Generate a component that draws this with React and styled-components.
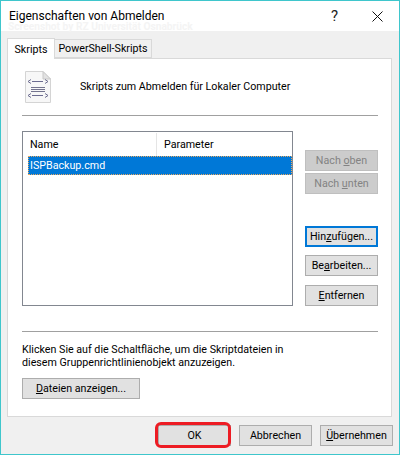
import React from 'react';
import styled, { createGlobalStyle } from 'styled-components';

const Global = createGlobalStyle`
  html, body { margin: 0; padding: 0; background: #fff; }
  * { box-sizing: border-box; }
`;

const Dialog = styled.div`
  position: relative;
  width: 400px;
  height: 455px;
  border: 1px solid #3fc6cc;
  background: #f0f0f0;
  font-family: Roboto, "Liberation Sans", sans-serif;
  font-size: 10.7px;
  color: #000;
  display: flex;
  flex-direction: column;
`;

const TitleBar = styled.div`
  height: 30px;
  flex: none;
  background: #fff;
  display: flex;
  align-items: center;
  padding: 0 16px 0 8px;
  font-size: 12px;
`;

const Title = styled.div`
  flex: 1;
`;

const HelpMark = styled.div`
  font-size: 15px;
  margin-right: 34px;
  color: #222;
`;

const Watermark = styled.div`
  position: absolute;
  left: 7px;
  top: 20px;
  font-size: 10.2px;
  font-weight: 700;
  color: #f4f4f4;
  white-space: nowrap;
`;

const TabStrip = styled.div`
  display: flex;
  align-items: flex-end;
  height: 21px;
  margin: 7px 0 -1px 6px;
  position: relative;
  z-index: 1;
`;

const Tab = styled.div`
  height: ${p => (p.$active ? 21 : 19)}px;
  width: ${p => p.$width}px;
  margin-bottom: ${p => (p.$active ? 0 : 1)}px;
  border: 1px solid #d9d9d9;
  border-left-width: ${p => (p.$active ? 1 : 0)}px;
  border-bottom-width: ${p => (p.$active ? 0 : 1)}px;
  background: ${p => (p.$active ? '#fff' : '#f0f0f0')};
  display: flex;
  align-items: center;
  justify-content: center;
  white-space: nowrap;
`;

const Panel = styled.div`
  width: 385px;
  height: 359px;
  margin-left: 6px;
  background: #fff;
  border: 1px solid #d9d9d9;
  padding: 0 13px 0 14px;
  display: flex;
  flex-direction: column;
`;

const Head = styled.div`
  height: 56px;
  flex: none;
  display: flex;
  align-items: center;
  padding: 0 0 1px 3px;
  gap: 29px;
`;

const Rule = styled.div`
  height: 1px;
  flex: none;
  width: 356px;
  background: #a0a0a0;
  margin-top: ${p => p.$top || 0}px;
`;

const Middle = styled.div`
  display: flex;
  margin-top: 15px;
  height: 175px;
  flex: none;
`;

const ListBox = styled.div`
  width: 272px;
  height: 175px;
  border: 1px solid #828790;
  padding: 1px 0 0 5px;
`;

const Columns = styled.div`
  display: flex;
  height: 23px;
  align-items: center;
`;

const Column = styled.div`
  width: ${p => p.$width}px;
  height: 100%;
  display: flex;
  align-items: center;
  border-right: ${p => (p.$divider ? '1px solid #e5e5e5' : 'none')};
  padding-left: ${p => (p.$divider ? 2 : 7)}px;
`;

const Row = styled.div`
  height: 19px;
  background: #0078d7;
  color: #fff;
  outline: 1px dotted #e8a860;
  outline-offset: -1px;
  padding-left: 2px;
  display: flex;
  align-items: center;
`;

const Side = styled.div`
  margin-left: 12px;
  width: 73px;
  padding-top: 19px;
  display: flex;
  flex-direction: column;
`;

const Button = styled.div`
  width: ${p => p.$width || 73}px;
  height: 21px;
  margin-top: ${p => p.$top || 0}px;
  flex: none;
  background: ${p => (p.$disabled ? '#cccccc' : '#e1e1e1')};
  color: ${p => (p.$disabled ? '#838383' : '#000')};
  border: ${p => (p.$focus ? '2px solid #0078d7' : p.$disabled ? '1px solid #bfbfbf' : '1px solid #adadad')};
  display: flex;
  align-items: center;
  justify-content: center;
  white-space: nowrap;
  position: relative;
`;

const Note = styled.div`
  margin-top: 11px;
  line-height: 13px;
  width: 356px;
`;

const Footer = styled.div`
  display: flex;
  justify-content: flex-end;
  gap: 8px;
  padding: 8px 6px 0 0;
`;

const Highlight = styled.div`
  position: absolute;
  left: -4px;
  top: -4px;
  width: 76px;
  height: 26px;
  border: 3px solid #ed1c24;
  border-radius: 6px;
`;

const ScriptIcon = () => (
  <svg width="26" height="32" viewBox="0 0 26 32">
    <path d="M0.5 0.5H18L25.5 8V31.5H0.5Z" fill="#f7f7f7" stroke="#d4d4d4" />
    <path d="M18 0.5V8H25.5Z" fill="#e2e2e2" stroke="#c8c8c8" />
    <path d="M6 8.5L3 10.5L6 12.5M7 10.5H18M20 8.5L23 10.5L20 12.5" fill="none" stroke="#6c6c90" />
    <path d="M6 16.5H20M6 18.5H20M6 20.5H20" fill="none" stroke="#74748e" />
    <path d="M6 22.5L3 24.5L6 26.5M7 24.5H18M20 22.5L23 24.5L20 26.5" fill="none" stroke="#6c6c90" />
  </svg>
);

const CloseIcon = () => (
  <svg width="11" height="11" viewBox="0 0 11 11">
    <path d="M0.5 0.5L10.5 10.5M10.5 0.5L0.5 10.5" stroke="#111" fill="none" />
  </svg>
);

const App = () => (
  <Dialog>
    <Global />
    <TitleBar>
      <Title>Eigenschaften von Abmelden</Title>
      <HelpMark>?</HelpMark>
      <CloseIcon />
    </TitleBar>
    <Watermark>Screenshot by RZ Universität Osnabrück</Watermark>
    <TabStrip>
      <Tab $active $width={48}>Skripts</Tab>
      <Tab $width={97}>PowerShell-Skripts</Tab>
    </TabStrip>
    <Panel>
      <Head>
        <ScriptIcon />
        <span>Skripts zum Abmelden für Lokaler Computer</span>
      </Head>
      <Rule />
      <Middle>
        <ListBox>
          <Columns>
            <Column $width={129} $divider>Name</Column>
            <Column>Parameter</Column>
          </Columns>
          <Row>ISPBackup.cmd</Row>
        </ListBox>
        <Side>
          <Button $disabled><span>Nach <u>o</u>ben</span></Button>
          <Button $disabled $top={2}><span>Nach <u>u</u>nten</span></Button>
          <Button $focus $top={32}><span>Hin<u>z</u>ufügen...</span></Button>
          <Button $top={8}><span>Be<u>a</u>rbeiten...</span></Button>
          <Button $top={9}><span><u>E</u>ntfernen</span></Button>
        </Side>
      </Middle>
      <Rule $top={25} />
      <Note>
        Klicken Sie auf die Schaltfläche, um die Skriptdateien in
        <br />
        diesem Gruppenrichtlinienobjekt anzuzeigen.
      </Note>
      <Button $width={118} $top={9}><span><u>D</u>ateien anzeigen...</span></Button>
    </Panel>
    <Footer>
      <Button>
        OK
        <Highlight />
      </Button>
      <Button>Abbrechen</Button>
      <Button><span><u>Ü</u>bernehmen</span></Button>
    </Footer>
  </Dialog>
);

export default App;
